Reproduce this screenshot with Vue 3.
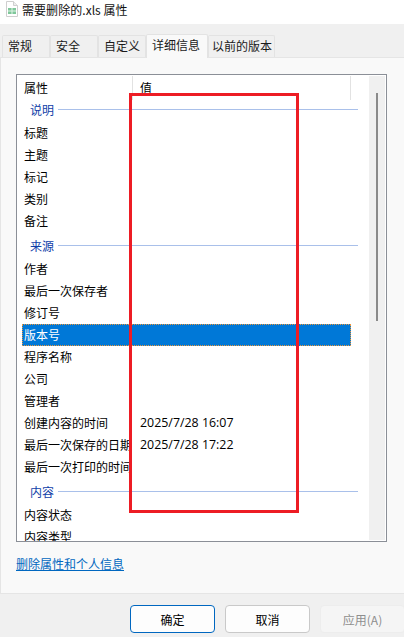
<script setup>
const tabs = [
  { label: '常规', width: 48 },
  { label: '安全', width: 48 },
  { label: '自定义', width: 48 },
  { label: '详细信息', width: 62, active: true },
  { label: '以前的版本', width: 67 }
]
const rows = [
  { type: 'group', name: '说明' },
  { name: '标题' }, { name: '主题' }, { name: '标记' }, { name: '类别' }, { name: '备注' },
  { type: 'group', name: '来源' },
  { name: '作者' }, { name: '最后一次保存者' }, { name: '修订号' },
  { name: '版本号', selected: true },
  { name: '程序名称' }, { name: '公司' }, { name: '管理者' },
  { name: '创建内容的时间', value: '2025/7/28 16:07' },
  { name: '最后一次保存的日期', value: '2025/7/28 17:22' },
  { name: '最后一次打印的时间' },
  { type: 'group', name: '内容' },
  { name: '内容状态' }, { name: '内容类型' }
]
</script>

<template>
  <div class="dialog">
    <header class="titlebar">
      <svg class="file-icon" width="14" height="16" viewBox="0 0 14 16">
        <path d="M1.5.5h7l4 4v11h-11z" fill="#fff" stroke="#cfcfcf" />
        <path d="M8.5.5v4h4" fill="#eee" stroke="#cfcfcf" />
        <rect x="3" y="7" width="8" height="6" fill="#7fc79a" />
        <path d="M7 7v6M3 10h8" stroke="#e2f4e7" />
      </svg>
      <span class="title">需要删除的.xls 属性</span>
    </header>

    <nav class="tabs">
      <div
        v-for="tab in tabs"
        :key="tab.label"
        class="tab"
        :class="{ active: tab.active }"
        :style="{ width: tab.width + 'px' }"
      >{{ tab.label }}</div>
    </nav>

    <main class="panel">
      <section class="listbox">
        <div class="list">
          <div class="list-head">
            <span class="head-name">属性</span>
            <span class="head-value">值</span>
            <i class="head-end"></i>
          </div>
          <template v-for="row in rows" :key="row.name">
            <div v-if="row.type === 'group'" class="group">
              <span class="group-name">{{ row.name }}</span>
              <span class="group-line"></span>
            </div>
            <div v-else class="row" :class="{ selected: row.selected }">
              <span class="cell-name">{{ row.name }}</span>
              <span class="cell-value">{{ row.value }}</span>
            </div>
          </template>
        </div>
        <div class="scrollbar"><div class="thumb"></div></div>
      </section>
      <a class="link">删除属性和个人信息</a>
    </main>

    <footer class="footer">
      <button class="btn primary">确定</button>
      <button class="btn">取消</button>
      <button class="btn disabled">应用(A)</button>
    </footer>

    <div class="redbox"></div>
  </div>
</template>

<style scoped>
.dialog {
  position: relative;
  width: 404px;
  height: 637px;
  overflow: hidden;
  background: #f0f0f0;
  color: #000;
  font-family: "Noto Sans CJK SC", "Open Sans", sans-serif;
  font-size: 12px;
}
.titlebar {
  height: 24px;
  background: #fff;
  display: flex;
  align-items: center;
  padding-left: 5px;
  box-sizing: border-box;
}
.file-icon { margin-right: 3px; margin-top: -6px; }
.title { margin-top: -6px; color: #111; letter-spacing: 0.05px; }
.tabs {
  height: 33px;
  box-sizing: border-box;
  padding: 11px 0 0 2px;
  display: flex;
  align-items: flex-end;
}
.tab {
  height: 22px;
  box-sizing: border-box;
  background: #f0f0f0;
  border: 1px solid #e3e3e3;
  border-bottom: none;
  padding-left: 5px;
  line-height: 20px;
  color: #1a1a1a;
  border-radius: 2px 2px 0 0;
  white-space: nowrap;
}
.tab:last-child { padding-left: 3px; }
.tab.active {
  height: 24px;
  background: #f9f9f9;
  line-height: 20px;
  position: relative;
  z-index: 1;
  margin-bottom: -1px;
}
.panel {
  height: 537px;
  box-sizing: border-box;
  background: #f9f9f9;
  border: 1px solid #e5e5e5;
  border-right: none;
  padding: 16px 0 0 15px;
}
.listbox {
  width: 371px;
  height: 468px;
  box-sizing: border-box;
  background: #fff;
  border: 1px solid #8b8f97;
  display: flex;
  overflow: hidden;
}
.list { width: 352px; flex: none; padding-top: 1px; }
.list-head {
  height: 20px;
  display: flex;
  align-items: center;
  position: relative;
  line-height: 20px;
}
.head-name { width: 116px; padding-left: 7px; box-sizing: border-box; border-right: 1px solid #e2e2e2; height: 24px; line-height: 24px; margin-bottom: -4px; }
.head-value { padding-left: 7px; line-height: 24px; height: 24px; margin-bottom: -4px; }
.head-end { position: absolute; left: 333px; top: 0; height: 24px; border-left: 1px solid #e2e2e2; }
.group {
  height: 26px;
  display: flex;
  align-items: center;
  padding-left: 13px;
  color: #0f3ea8;
}
.group-name { width: 28px; flex: none; }
.group-line { width: 300px; height: 1px; background: #a9c0ea; }
.row {
  height: 22px;
  display: flex;
  align-items: center;
  width: 329px;
  margin-left: 5px;
  padding-bottom: 1px;
  box-sizing: border-box;
}
.cell-name { width: 118px; flex: none; padding-left: 2px; white-space: nowrap; overflow: hidden; box-sizing: border-box; }
.cell-value { font-family: "Open Sans", sans-serif; font-size: 12.4px; }
.row.selected {
  background: #0078d7;
  color: #fff;
  outline: 1px dotted #e9973c;
  outline-offset: -1px;
}
.scrollbar {
  width: 16px;
  margin: 1px 0 1px 0;
  background: #f0f0f0;
  position: relative;
}
.thumb {
  width: 2px;
  height: 228px;
  background: #8a8a8a;
  margin: 17px 0 0 7px;
}
.link {
  display: inline-block;
  margin-top: 13px;
  color: #0067c0;
  text-decoration: underline;
  line-height: 18px;
}
.footer {
  display: flex;
  gap: 10px;
  padding: 11px 0 0 130px;
}
.btn {
  width: 85px;
  height: 28px;
  flex: none;
  box-sizing: border-box;
  font: inherit;
  color: #000;
  background: #fdfdfd;
  border: 1px solid #c9c9c9;
  border-radius: 4px;
  padding: 0;
}
.btn.primary { border: 1.5px solid #0067c0; }
.btn.disabled { background: #f5f5f5; border-color: #ededed; color: #8e8e8e; }
.redbox {
  position: absolute;
  left: 129px;
  top: 93px;
  width: 170px;
  height: 420px;
  box-sizing: border-box;
  border: 3px solid #ed1c24;
}
</style>
